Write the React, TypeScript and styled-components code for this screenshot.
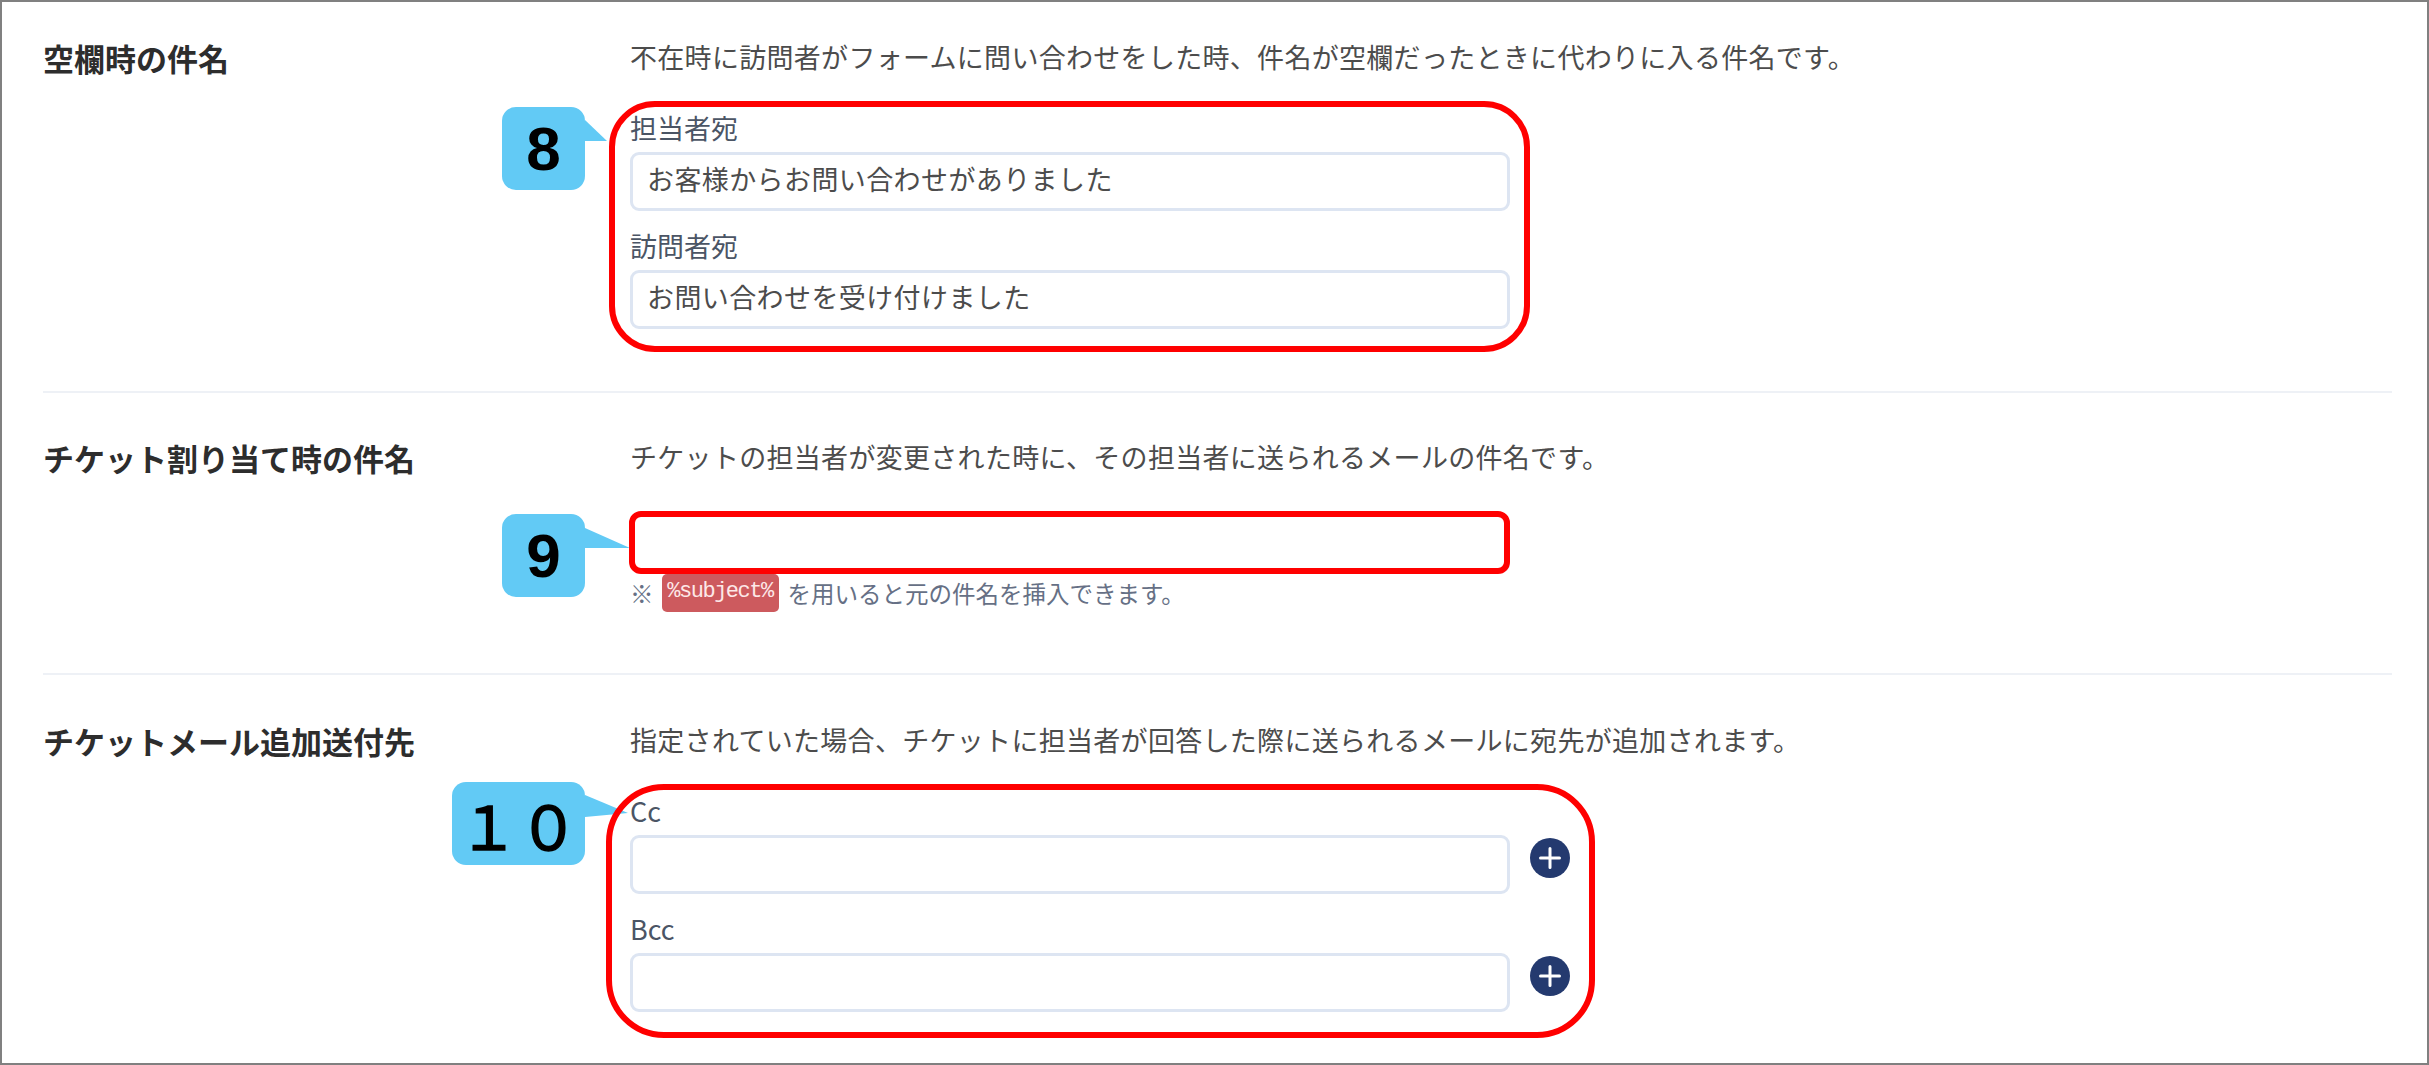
import styled, { createGlobalStyle } from "styled-components";

const GlobalStyle = createGlobalStyle`
  html, body {
    margin: 0;
    padding: 0;
    background: #fff;
  }
  body {
    font-family: "Noto Sans CJK JP", "Noto Sans", sans-serif;
  }
`

type CalloutProps = {
  text: string
  width: number
  top: number
  tail: string
  wide?: boolean
}

function Callout({ text, width, top, tail, wide = false }: CalloutProps) {
  return (
    <CalloutBox $width={width} $top={top} $wide={wide}>
      {text}
      <CalloutTail width="50" height="40" viewBox="0 0 50 40">
        <polygon points={tail} fill="#62caf5" />
      </CalloutTail>
    </CalloutBox>
  )
}

function AddButton() {
  return (
    <RoundButton>
      <svg width="24" height="24" viewBox="0 0 24 24">
        <path d="M12 2.5v19M2.5 12h19" stroke="#fff" strokeWidth="3" strokeLinecap="round" />
      </svg>
    </RoundButton>
  )
}

export default function App() {
  return (
    <Frame>
      <GlobalStyle />
      <Section $top={35} $bottom={62}>
        <Title>空欄時の件名</Title>
        <Body>
          <Description>不在時に訪問者がフォームに問い合わせをした時、件名が空欄だったときに代わりに入る件名です。</Description>
          <FieldGroup>
            <Callout text="8" width={83} top={-2} tail="0,13 22,34 0,34" />
            <Field>
              <FieldLabel>担当者宛</FieldLabel>
              <InputBox>お客様からお問い合わせがありました</InputBox>
            </Field>
            <Field>
              <FieldLabel>訪問者宛</FieldLabel>
              <InputBox>お問い合わせを受け付けました</InputBox>
            </Field>
            <RedOutline $top={-8} $right={-20} $bottom={-23} $left={-21} $radius={46} />
          </FieldGroup>
        </Body>
      </Section>
      <Section $top={44} $bottom={61}>
        <Title>チケット割り当て時の件名</Title>
        <Body>
          <Description>チケットの担当者が変更された時に、その担当者に送られるメールの件名です。</Description>
          <SingleGroup>
            <Callout text="9" width={83} top={0} tail="0,14 45,34 0,34" />
            <InputBox />
            <RedOutline $top={-3} $right={0} $bottom={-1} $left={-1} $radius={12} />
          </SingleGroup>
          <Note>
            ※<Code>%subject%</Code>を用いると元の件名を挿入できます。
          </Note>
        </Body>
      </Section>
      <Section $top={45} $bottom={0} $last>
        <Title>チケットメール追加送付先</Title>
        <Body>
          <Description>指定されていた場合、チケットに担当者が回答した際に送られるメールに宛先が追加されます。</Description>
          <FieldGroup $wide>
            <Callout text="１０" width={133} top={-10} tail="0,13 43,31 0,35" wide />
            <Field>
              <FieldLabel>Cc</FieldLabel>
              <InputRow>
                <InputBox />
                <AddButton />
              </InputRow>
            </Field>
            <Field>
              <FieldLabel>Bcc</FieldLabel>
              <InputRow>
                <InputBox />
                <AddButton />
              </InputRow>
            </Field>
            <RedOutline $top={-8} $right={-25} $bottom={-26} $left={-24} $radius={58} />
          </FieldGroup>
        </Body>
      </Section>
    </Frame>
  )
}

const Frame = styled.div`
  box-sizing: border-box;
  width: 2429px;
  height: 1065px;
  padding: 0 35px 0 41px;
  border: 2px solid #808080;
  background: #fff;
  overflow: hidden;
`

const Section = styled.section<{ $top: number; $bottom: number; $last?: boolean }>`
  display: grid;
  grid-template-columns: 587px 1fr;
  padding: ${props => props.$top}px 0 ${props => props.$bottom}px;
  border-bottom: ${props => props.$last ? 'none' : '2px solid #eef1f6'};
`

const Title = styled.h2`
  margin: 0;
  font-size: 31px;
  line-height: 42px;
  font-weight: 700;
  color: #2d2d2d;
`

const Body = styled.div`
  display: flex;
  flex-direction: column;
  align-items: flex-start;
`

const Description = styled.p`
  margin: 0;
  font-size: 27px;
  line-height: 40px;
  letter-spacing: 0.3px;
  color: #4c4c4c;
  white-space: nowrap;
`

const FieldGroup = styled.div<{ $wide?: boolean }>`
  position: relative;
  display: flex;
  flex-direction: column;
  gap: 16px;
  width: ${props => props.$wide ? 940 : 880}px;
  margin-top: 32px;
`

const SingleGroup = styled.div`
  position: relative;
  width: 880px;
  margin-top: 37px;
`

const Field = styled.div`
  display: flex;
  flex-direction: column;
`

const FieldLabel = styled.label`
  margin-bottom: 5px;
  font-size: 27px;
  line-height: 38px;
  color: #4b5565;
`

const InputRow = styled.div`
  display: flex;
  align-items: flex-start;
  gap: 20px;
`

const InputBox = styled.div`
  box-sizing: border-box;
  flex: none;
  width: 880px;
  height: 59px;
  padding: 0 14px;
  border: 3px solid #dde5f2;
  border-radius: 9px;
  background: #fff;
  font-size: 27px;
  line-height: 48px;
  letter-spacing: 0.4px;
  color: #4c4c4c;
`

const RoundButton = styled.button`
  display: flex;
  align-items: center;
  justify-content: center;
  flex: none;
  width: 40px;
  height: 40px;
  margin-top: 3px;
  padding: 0;
  border: none;
  border-radius: 50%;
  background: #243a6f;
`

const Note = styled.div`
  display: flex;
  align-items: center;
  height: 38px;
  margin-top: 1px;
  font-size: 23.5px;
  color: #667085;
`

const Code = styled.code`
  box-sizing: border-box;
  width: 117px;
  height: 38px;
  margin: 0 9px 0 8px;
  border-radius: 5px;
  background: #cd5a5e;
  font-family: "Liberation Mono", monospace;
  font-size: 22px;
  letter-spacing: -1.5px;
  line-height: 36px;
  text-align: center;
  color: #fde8e8;
`

const RedOutline = styled.div<{ $top: number; $right: number; $bottom: number; $left: number; $radius: number }>`
  position: absolute;
  top: ${props => props.$top}px;
  right: ${props => props.$right}px;
  bottom: ${props => props.$bottom}px;
  left: ${props => props.$left}px;
  border: 6px solid #ff0000;
  border-radius: ${props => props.$radius}px;
  pointer-events: none;
`

const CalloutBox = styled.div<{ $width: number; $top: number; $wide: boolean }>`
  position: absolute;
  top: ${props => props.$top}px;
  left: ${props => -45 - props.$width}px;
  width: ${props => props.$width}px;
  height: 83px;
  border-radius: 14px;
  background: #62caf5;
  font-family: ${props => props.$wide ? '"Noto Sans CJK JP", sans-serif' : '"Liberation Sans", sans-serif'};
  font-size: ${props => props.$wide ? 60 : 62}px;
  font-weight: ${props => props.$wide ? 400 : 700};
  -webkit-text-stroke: ${props => props.$wide ? '1.6px #000' : '0'};
  line-height: 83px;
  text-align: center;
  color: #000;
`

const CalloutTail = styled.svg`
  position: absolute;
  top: 0;
  left: 100%;
  overflow: visible;
`
